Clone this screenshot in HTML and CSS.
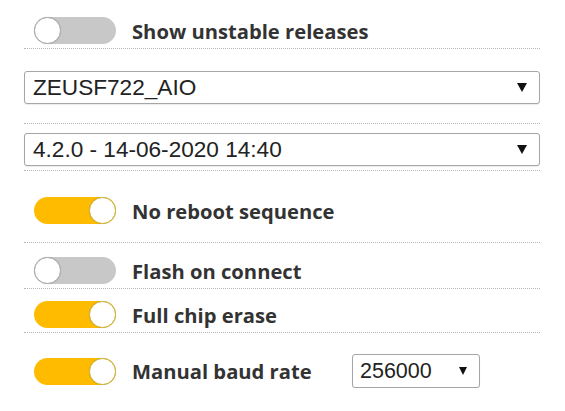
FILE: index.html
```html
<!DOCTYPE html>
<html>
<head>
<meta charset="utf-8">
<link rel="stylesheet" href="styles.css">
</head>
<body>
<div class="panel">
  <div class="row r1">
    <span class="toggle"><span class="knob"></span></span>
    <span class="label">Show unstable releases</span>
  </div>
  <div class="row r2">
    <div class="select wide"><span class="val">ZEUSF722_AIO</span><span class="arrow"></span></div>
  </div>
  <div class="row r3">
    <div class="select wide"><span class="val">4.2.0 - 14-06-2020 14:40</span><span class="arrow"></span></div>
  </div>
  <div class="row r4">
    <span class="toggle on"><span class="knob"></span></span>
    <span class="label">No reboot sequence</span>
  </div>
  <div class="row r5">
    <span class="toggle"><span class="knob"></span></span>
    <span class="label">Flash on connect</span>
  </div>
  <div class="row r6">
    <span class="toggle on"><span class="knob"></span></span>
    <span class="label">Full chip erase</span>
  </div>
  <div class="row r7 last">
    <span class="toggle on"><span class="knob"></span></span>
    <span class="label">Manual baud rate</span>
    <div class="select baud"><span class="val">256000</span><span class="arrow small"></span></div>
  </div>
</div>
</body>
</html>
```

FILE: styles.css
```css
html, body {
  margin: 0;
  padding: 0;
  background: #ffffff;
}

.panel {
  margin-left: 24px;
  width: 516px;
  display: flex;
  flex-direction: column;
}

.row {
  display: flex;
  align-items: center;
  border-bottom: 1px dotted #b8b8b8;
}

.row.last {
  border-bottom: none;
}

.r1 { padding: 17px 0 4px 0; height: 27px; }
.r2 { padding: 22px 0 19px 0; }
.r3 { padding: 9px 0 4px 0; }
.r4 { padding: 26px 0 18px 0; height: 27px; }
.r5 { padding: 14px 0 4px 0; height: 27px; }
.r6 { padding: 12px 0 4px 0; height: 27px; }
.r7 { padding: 21px 0 0 0; height: 34px; }

.toggle {
  position: relative;
  display: inline-block;
  width: 82px;
  height: 27px;
  margin-left: 10px;
  border-radius: 14px;
  background: #c8c8c8;
  flex: none;
}

.toggle .knob {
  position: absolute;
  top: 0;
  left: 0;
  width: 25px;
  height: 25px;
  border-radius: 50%;
  background: #ffffff;
  border: 1px solid #a9a9a9;
  box-shadow: 0 0 1px rgba(0,0,0,0.2);
}

.toggle.on {
  background: #ffbb00;
}

.toggle.on .knob {
  left: auto;
  right: 0;
  border-color: #c9b43a;
}

.label {
  margin-left: 16px;
  font-family: "Open Sans", sans-serif;
  font-weight: 700;
  font-size: 20.2px;
  color: #333333;
}

.select {
  display: flex;
  align-items: center;
  justify-content: space-between;
  box-sizing: border-box;
  height: 33px;
  border: 1px solid #a6a6a6;
  border-radius: 3px;
  box-shadow: 0 1px 1px rgba(0,0,0,0.08);
  background: #ffffff;
  font-family: "Liberation Sans", Arial, sans-serif;
  font-size: 22.6px;
  color: #222222;
}

.select.wide {
  width: 516px;
  padding: 0 12px 0 8px;
}

.select .arrow {
  width: 0;
  height: 0;
  border-left: 5px solid transparent;
  border-right: 5px solid transparent;
  border-top: 9px solid #111111;
}

.select .arrow.small {
  border-left-width: 4.5px;
  border-right-width: 4.5px;
  border-top-width: 8px;
}

.select.baud {
  width: 128px;
  height: 34px;
  margin-left: auto;
  margin-right: 60px;
  padding: 0 12px 0 7px;
  font-size: 21.5px;
}
```
